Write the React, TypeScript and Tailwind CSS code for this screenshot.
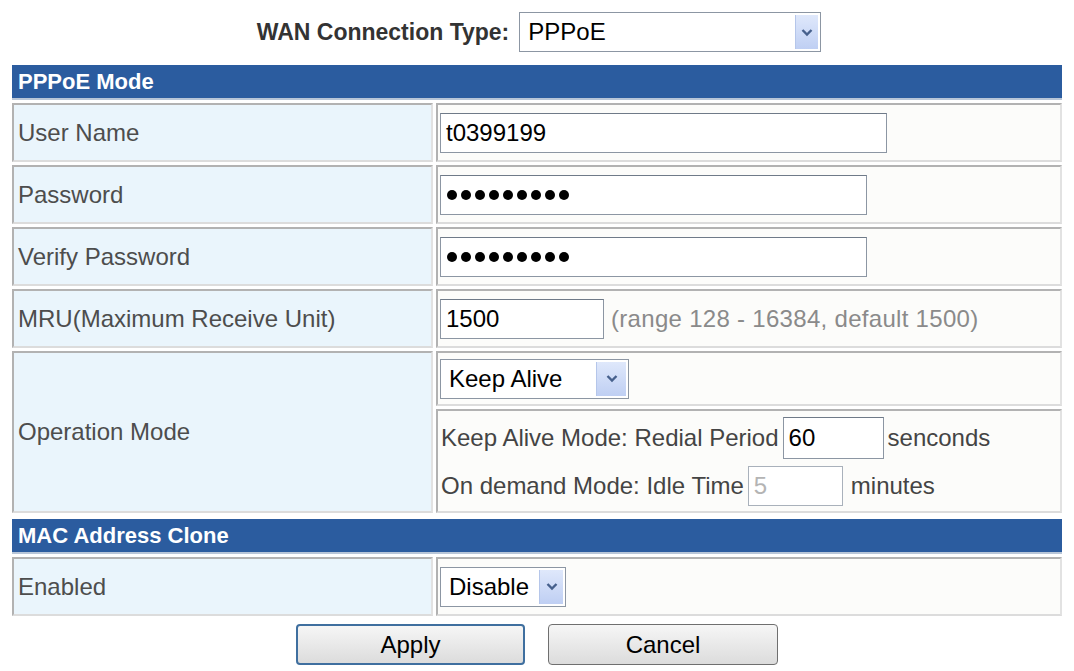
import React from "react";

const font = { fontFamily: '"Liberation Sans", Arial, sans-serif' };

// little blue drop-down button drawn at the right of each select box
const Arrow: React.FC<{ className?: string }> = ({ className = "" }) => (
  <span
    className={`flex items-center justify-center bg-gradient-to-b from-[#dfe8fb] to-[#bfcff3] border-l border-[#b5c6ea] ${className}`}
  >
    <svg width="12" height="9" viewBox="0 0 12 9">
      <path d="M1.5 2 L6 6.5 L10.5 2" fill="none" stroke="#46608c" strokeWidth="2.4" />
    </svg>
  </span>
);

const Select: React.FC<{ value: string; width: string; arrow: string }> = ({ value, width, arrow }) => (
  <div className={`flex h-[40px] ${width} border border-[#8c96a3] bg-white`}>
    <span className="flex-1 pl-[8px] text-[24px] leading-[38px] text-black">{value}</span>
    <Arrow className={`${arrow} my-[2px] mr-[2px]`} />
  </div>
);

const TextBox: React.FC<{
  width: string;
  children?: React.ReactNode;
  className?: string;
  muted?: boolean;
}> = ({ width, children, className = "h-[40px]", muted = false }) => (
  <div
    className={`flex items-center ${width} border bg-white pl-[5px] text-[24px] ${
      muted ? "border-[#a9b1bb] text-[#b4b4b4]" : "border-[#8c96a3] border-t-[#6f7a88] text-black"
    } ${className}`}
  >
    {children}
  </div>
);

const Dots: React.FC = () => (
  <div className="flex gap-[4px] pl-[1px]">
    {Array.from({ length: 9 }).map((_, i) => (
      <span key={i} className="w-[10px] h-[10px] rounded-full bg-black" />
    ))}
  </div>
);

const Header: React.FC<{ title: string }> = ({ title }) => (
  <div className="h-[35px] bg-[#2b5c9f] border-b-2 border-[#b8c6d8] pl-[6px] text-[22px] font-bold leading-[33px] text-white">
    {title}
  </div>
);

const cellBorder = "border-2 border-[#b2b2b2] border-b-[#dcdcdc] border-r-[#e2e2e2]";
const labelCell = `w-[421px] shrink-0 flex items-center bg-[#eaf5fc] ${cellBorder} pl-[4px] text-[24px] text-[#4d4d4d]`;
const valueCell = `flex items-center gap-[7px] bg-[#fcfcfa] ${cellBorder} pl-[2px]`;

const Row: React.FC<{ label: string; children: React.ReactNode }> = ({ label, children }) => (
  <div className="flex gap-[3px] h-[59px]">
    <div className={labelCell}>{label}</div>
    <div className={`${valueCell} flex-1`}>{children}</div>
  </div>
);

export default function App() {
  return (
    <div className="min-h-screen bg-white" style={font}>
      <div className="flex items-center justify-center gap-[10px] pt-[12px] pl-[4px]">
        <span className="text-[23px] font-bold text-[#333]">WAN Connection Type:</span>
        <Select value="PPPoE" width="w-[302px]" arrow="w-[23px]" />
      </div>

      <div className="mx-[12px] mt-[13px] flex flex-col gap-[3px]">
        <Header title="PPPoE Mode" />

        <Row label="User Name">
          <TextBox width="w-[447px]">t0399199</TextBox>
        </Row>
        <Row label="Password">
          <TextBox width="w-[427px]">
            <Dots />
          </TextBox>
        </Row>
        <Row label="Verify Password">
          <TextBox width="w-[427px]">
            <Dots />
          </TextBox>
        </Row>
        <Row label="MRU(Maximum Receive Unit)">
          <TextBox width="w-[164px]">1500</TextBox>
          <span className="text-[24px] tracking-[0.3px] text-[#8a8a8a]">(range 128 - 16384, default 1500)</span>
        </Row>

        {/* operation mode: select on top, the two timers below */}
        <div className="flex gap-[3px] h-[162px]">
          <div className={labelCell}>Operation Mode</div>
          <div className="flex-1 flex flex-col gap-[3px]">
            <div className={`${valueCell} h-[55px] shrink-0`}>
              <Select value="Keep Alive" width="w-[189px]" arrow="w-[30px]" />
            </div>
            <div className={`flex-1 flex flex-col justify-center gap-[7px] bg-[#fcfcfa] ${cellBorder} pl-[3px] text-[24px] text-[#444]`}>
              <div className="flex items-center">
                <span>Keep Alive Mode: Redial Period</span>
                <TextBox width="w-[101px]" className="ml-[4px] h-[42px]">
                  60
                </TextBox>
                <span className="ml-[4px]">senconds</span>
              </div>
              <div className="flex items-center">
                <span>On demand Mode: Idle Time</span>
                <TextBox width="w-[95px]" className="ml-[4px] h-[40px]" muted>
                  5
                </TextBox>
                <span className="ml-[8px]">minutes</span>
              </div>
            </div>
          </div>
        </div>

        <div className="mt-[3px]">
          <Header title="MAC Address Clone" />
        </div>
        <Row label="Enabled">
          <Select value="Disable" width="w-[126px]" arrow="w-[24px]" />
        </Row>
      </div>

      <div className="flex justify-center gap-[23px] mt-[8px]">
        <button className="w-[229px] h-[41px] rounded-[4px] border-2 border-[#3f6f9f] bg-gradient-to-b from-[#f6f6f6] to-[#dcdcdc] text-[24px] text-black">
          Apply
        </button>
        <button className="w-[230px] h-[41px] rounded-[4px] border border-[#6f6f6f] bg-gradient-to-b from-[#f6f6f6] to-[#dcdcdc] text-[24px] text-black">
          Cancel
        </button>
      </div>
    </div>
  );
}
